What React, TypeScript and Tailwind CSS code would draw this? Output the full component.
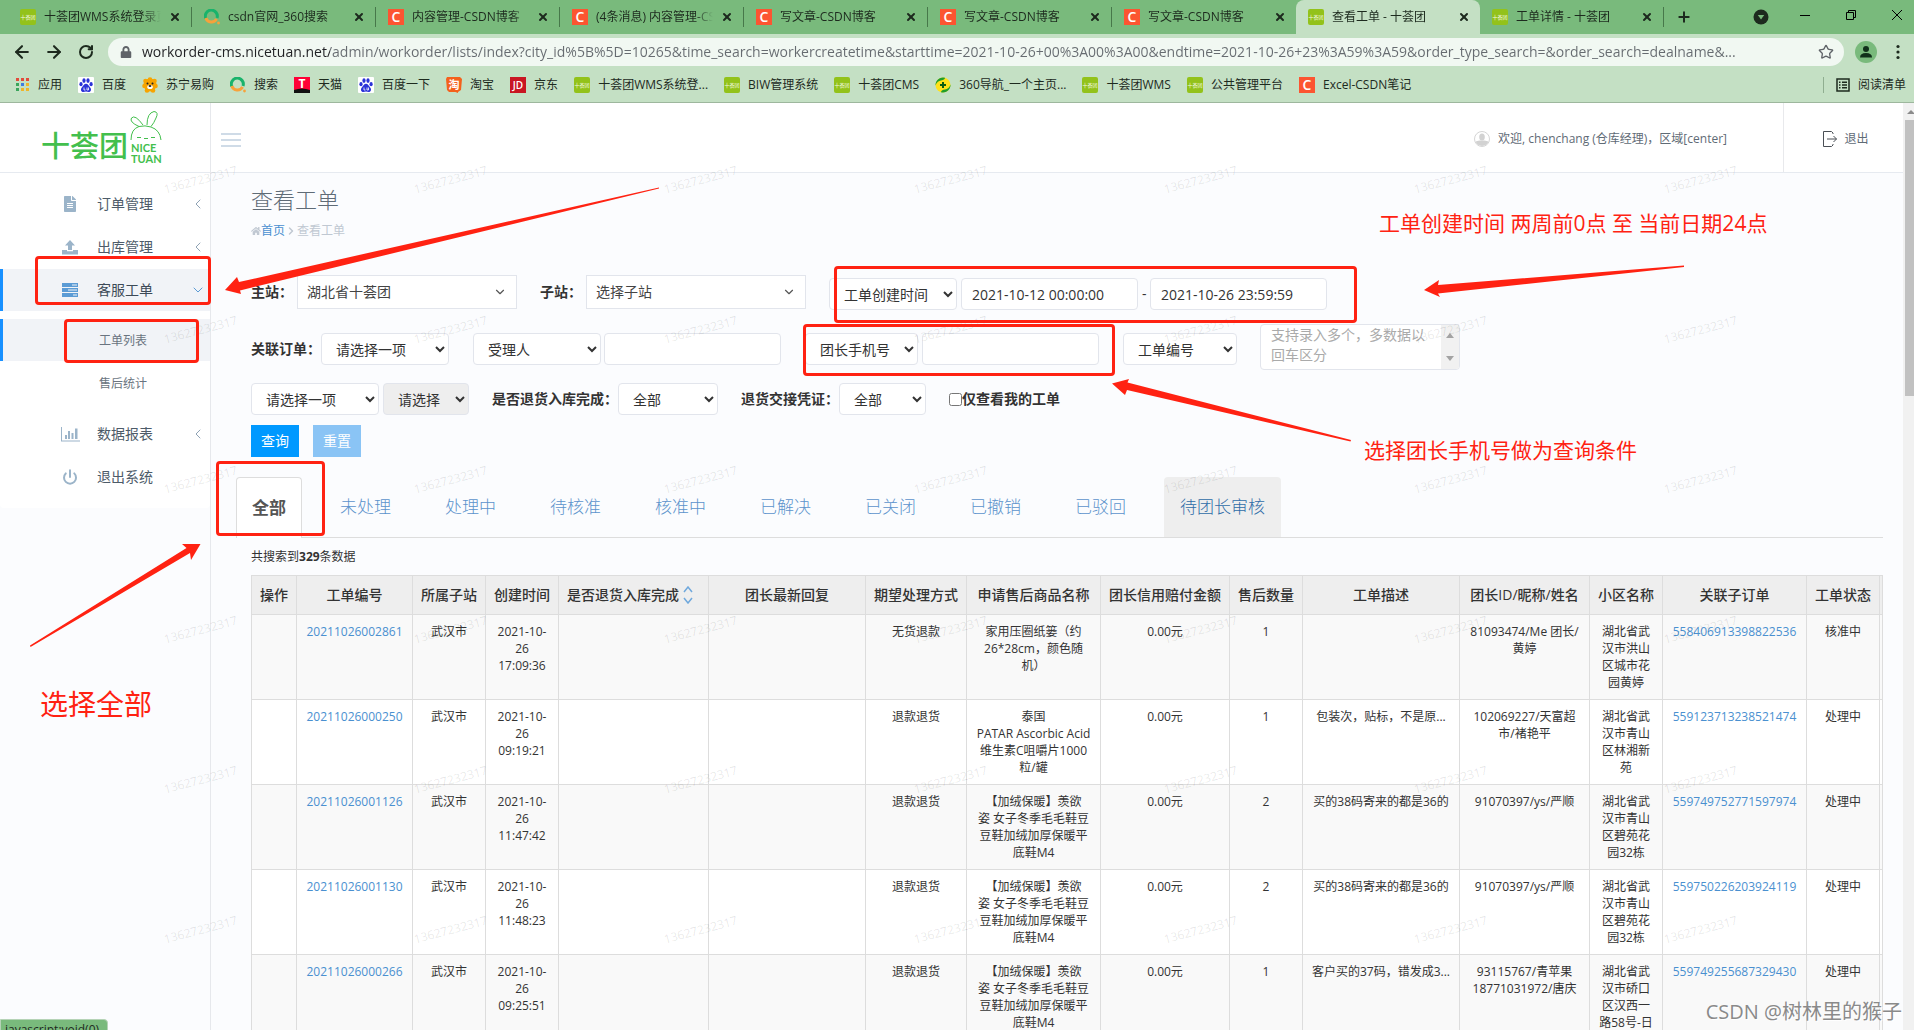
import type { ReactNode } from "react";
import clsx from "clsx";
import { ArrowLeft, ArrowRight, ChevronDown, ChevronLeft, ChevronRight, Plus, Power, RotateCw, Star, X } from "lucide-react";
import { FaFileAlt, FaHome, FaLock } from "react-icons/fa";

/* ---------- site icons ---------- */

function NiceTuanIcon() {
  return (
    <svg viewBox="0 0 16 16" className="size-4 shrink-0">
      <rect width="16" height="16" rx="2" fill="#93c21a" />
      <text x="8" y="10" fontSize="5" textAnchor="middle" fill="#f3f9e2">
        十荟团
      </text>
    </svg>
  );
}

function LetterIcon({ letter, color }: { letter: string; color: string }) {
  return (
    <svg viewBox="0 0 16 16" className="size-4 shrink-0">
      <rect width="16" height="16" fill={color} />
      {letter === "T" && <path d="M0 16v-3q8-3 16 0v3z" fill="#111" />}
      <text
        x="8"
        y={letter === "T" ? 11 : letter === "JD" ? 12 : 13}
        fontSize={letter.length > 1 ? 10 : letter === "T" ? 12 : 14}
        fontWeight={letter === "T" ? 700 : 600}
        textAnchor="middle"
        fill="#fff"
      >
        {letter}
      </text>
    </svg>
  );
}

function SoIcon() {
  return (
    <svg viewBox="0 0 16 16" className="size-4 shrink-0" fill="none" strokeWidth="3">
      <path d="M1.8 9.5A6 6 0 1 1 13 9" stroke="#19b36b" />
      <path d="M1.8 9A6 6 0 0 0 12.6 10" stroke="#f7a23b" />
      <circle cx="14.5" cy="14" r="1.4" fill="#f7a23b" />
    </svg>
  );
}

function BaiduIcon() {
  return (
    <svg viewBox="0 0 16 16" className="size-4 shrink-0" fill="#2a32d8">
      <rect width="16" height="16" rx="1" fill="#fff" />
      <ellipse cx="3" cy="7.2" rx="1.6" ry="2.1" />
      <ellipse cx="6" cy="3.6" rx="1.6" ry="2.3" />
      <ellipse cx="10" cy="3.6" rx="1.6" ry="2.3" />
      <ellipse cx="13.1" cy="7.2" rx="1.6" ry="2.1" />
      <path d="M8 6.800c2 0 2.600 2 4 3.400 1.800 1.800 1.200 4.800-1.400 4.800-1 0-1.600-.4-2.600-.4s-1.600.4-2.600.4C2.800 15 2.200 12 4 10.200 5.400 8.800 6 6.800 8 6.800z" />
      <path d="M6 10.500v2.500h1.500M9 10.500v2.500h1.500v-2.500" stroke="#fff" strokeWidth=".8" fill="none" />
    </svg>
  );
}

function SuningIcon() {
  return (
    <svg viewBox="0 0 16 16" className="size-4 shrink-0">
      <g fill="#f7a400">
        <circle cx="8" cy="8" r="6.500" />
        <circle cx="3.500" cy="4" r="2.300" />
        <circle cx="12.500" cy="4" r="2.300" />
        <circle cx="8" cy="2.500" r="2.300" />
        <circle cx="2.500" cy="9" r="2.300" />
        <circle cx="13.500" cy="9" r="2.300" />
        <circle cx="5" cy="13.500" r="2.300" />
        <circle cx="11" cy="13.500" r="2.300" />
      </g>
      <circle cx="5.500" cy="6.500" r="1" fill="#222" />
      <circle cx="10.500" cy="6.500" r="1" fill="#222" />
      <ellipse cx="8" cy="10" rx="2.800" ry="2" fill="#fff" />
      <ellipse cx="8" cy="9" rx="1.400" ry="1" fill="#222" />
    </svg>
  );
}

function TaobaoIcon() {
  return (
    <svg viewBox="0 0 16 16" className="size-4 shrink-0">
      <path d="M1 0h13l2 2-1 11-3 2v1L9.500 15H3l-2-2L0 2z" fill="#f4611c" />
      <text x="8" y="12" fontSize="11" fontWeight="700" textAnchor="middle" fill="#fff">
        淘
      </text>
    </svg>
  );
}

function Nav360Icon() {
  return (
    <svg viewBox="0 0 16 16" className="size-4 shrink-0">
      <circle cx="8" cy="8" r="7.500" fill="#ffe11a" />
      <path d="M10 .8A7.500 7.500 0 0 0 .5 8.500Q2 4 6 3.500T10 .8zM6 15.200A7.500 7.500 0 0 0 15.500 7.500Q14 12 10 12.500T6 15.200z" fill="#1f9d2c" />
      <path d="M8 5v6M5 8h6" stroke="#0b5c12" strokeWidth="2" />
    </svg>
  );
}

function AppsIcon() {
  const colors = ["#e24a3b", "#e24a3b", "#e24a3b", "#3ba55c", "#3d7de0", "#efb52a", "#3ba55c", "#efb52a", "#efb52a"];
  return (
    <svg viewBox="0 0 14 14" className="size-3.5 shrink-0">
      {colors.map((fill, i) => (
        <rect key={i} x={(i % 3) * 5} y={Math.floor(i / 3) * 5} width="3" height="3" fill={fill} />
      ))}
    </svg>
  );
}

const csdn = <LetterIcon letter="C" color="#fc5531" />;
const tuan = <NiceTuanIcon />;

/* ---------- browser ---------- */

const browserTabs: { icon: ReactNode; title: string; active?: boolean }[] = [
  { icon: tuan, title: "十荟团WMS系统登录页面" },
  { icon: <SoIcon />, title: "csdn官网_360搜索" },
  { icon: csdn, title: "内容管理-CSDN博客" },
  { icon: csdn, title: "(4条消息) 内容管理-CSDN博客" },
  { icon: csdn, title: "写文章-CSDN博客" },
  { icon: csdn, title: "写文章-CSDN博客" },
  { icon: csdn, title: "写文章-CSDN博客" },
  { icon: tuan, title: "查看工单 - 十荟团", active: true },
  { icon: tuan, title: "工单详情 - 十荟团" },
];

const bookmarks: { icon: ReactNode; title: string }[] = [
  { icon: <AppsIcon />, title: "应用" },
  { icon: <BaiduIcon />, title: "百度" },
  { icon: <SuningIcon />, title: "苏宁易购" },
  { icon: <SoIcon />, title: "搜索" },
  { icon: <LetterIcon letter="T" color="#ff0036" />, title: "天猫" },
  { icon: <BaiduIcon />, title: "百度一下" },
  { icon: <TaobaoIcon />, title: "淘宝" },
  { icon: <LetterIcon letter="JD" color="#c91623" />, title: "京东" },
  { icon: tuan, title: "十荟团WMS系统登..." },
  { icon: tuan, title: "BIW管理系统" },
  { icon: tuan, title: "十荟团CMS" },
  { icon: <Nav360Icon />, title: "360导航_一个主页..." },
  { icon: tuan, title: "十荟团WMS" },
  { icon: tuan, title: "公共管理平台" },
  { icon: csdn, title: "Excel-CSDN笔记" },
];

const url =
  "workorder-cms.nicetuan.net/admin/workorder/lists/index?city_id%5B%5D=10265&time_search=workercreatetime&starttime=2021-10-26+00%3A00%3A00&endtime=2021-10-26+23%3A59%3A59&order_type_search=&order_search=dealname&...";

function TabStrip() {
  return (
    <div className="flex h-[34px] bg-[#79ba7c] pl-2">
      {browserTabs.map((tab, i) => (
        <div
          key={i}
          className={clsx(
            "flex min-w-0 max-w-[184px] flex-1 items-center",
            tab.active && "rounded-t-lg bg-[#c4e0c4]"
          )}
        >
          <div className="flex min-w-0 flex-1 items-center gap-2 pr-2.5 pl-3">
            {tab.icon}
            <span className="min-w-0 flex-1 overflow-hidden whitespace-nowrap text-xs text-[#1d2a1e] [mask-image:linear-gradient(90deg,#000_85%,transparent)]">
              {tab.title}
            </span>
            <button aria-label="关闭标签页">
              <X className="size-3 text-[#1d2a1e]" strokeWidth={4} />
            </button>
          </div>
          {!tab.active && i !== 6 && <div className="h-5 w-px bg-[#47784a]" />}
        </div>
      ))}
      <button aria-label="新标签页" className="ml-3">
        <Plus className="size-4 text-[#1d2a1e]" strokeWidth={3} />
      </button>
      <div className="ml-auto flex items-center gap-[34px] pr-[11px] text-black">
        <svg viewBox="0 0 16 16" className="-mr-1 size-4">
          <circle cx="8" cy="8" r="7.500" fill="#1d2a1e" />
          <path d="M4.800 6h6.400L8 10.500z" fill="#79ba7c" />
        </svg>
        <svg viewBox="0 0 12 12" className="mb-1 size-3" stroke="currentColor" fill="none">
          <path d="M1 6.500h10" />
        </svg>
        <svg viewBox="0 0 12 12" className="mb-1 size-3" stroke="currentColor" fill="none">
          <path d="M1.500 3.500h7v7h-7zM3.500 3.500v-2h7v7h-2" />
        </svg>
        <svg viewBox="0 0 12 12" className="mb-1 size-3" stroke="currentColor" fill="none">
          <path d="M1 1l10 10M11 1L1 11" />
        </svg>
      </div>
    </div>
  );
}

function BrowserChrome() {
  return (
    <div className="shrink-0 border-b border-[#9db79d] bg-[#c4e0c4] text-[#1d2a1e]">
      <TabStrip />
      <div className="flex items-center pt-1 pr-3 pl-3">
        <div className="flex gap-3">
          <ArrowLeft className="size-5" strokeWidth={2.500} />
          <ArrowRight className="size-5" strokeWidth={2.500} />
          <RotateCw className="size-5 p-0.5" strokeWidth={3} />
        </div>
        <div className="ml-3 flex h-7 min-w-0 flex-1 items-center rounded-full bg-[#f1f8f2] pr-2.5 pl-3">
          <FaLock className="size-3 text-[#5f6368]" />
          <input
            aria-label="地址"
            readOnly
            value={url}
            className="ml-2.5 min-w-0 flex-1 bg-[linear-gradient(90deg,#202124_188px,#666b70_188px)] bg-clip-text text-sm text-transparent outline-none"
          />
          <Star className="size-4 text-[#5f6368]" />
        </div>
        <svg viewBox="0 0 22 22" className="ml-[11px] size-[22px]">
          <circle cx="11" cy="11" r="11" fill="#79ba7c" />
          <circle cx="11" cy="8" r="3" fill="#10301a" />
          <path d="M5 16.500q0-4.500 6-4.500t6 4.500z" fill="#10301a" />
        </svg>
        <svg viewBox="0 0 4 16" className="mr-0.5 ml-[19px] h-4 w-1" fill="currentColor">
          <circle cx="2" cy="2.500" r="1.600" />
          <circle cx="2" cy="8" r="1.600" />
          <circle cx="2" cy="13.500" r="1.600" />
        </svg>
      </div>
      <div className="flex h-9 items-center gap-4 pt-px pl-4 text-xs">
        {bookmarks.map((item) => (
          <a key={item.title} href="#" className="flex items-center gap-2 whitespace-nowrap">
            {item.icon}
            {item.title}
          </a>
        ))}
        <button className="ml-auto flex items-center gap-2 border-l border-[#8fae90] pr-2 pl-3">
          <svg viewBox="0 0 14 14" className="size-3.5" fill="none" stroke="currentColor" strokeWidth="1.500">
            <path d="M1 1h12v12H1zM3 4.200h1.500M3 7h1.500M3 9.800h1.500M6 4.200h5M6 7h5M6 9.800h5" />
          </svg>
          阅读清单
        </button>
      </div>
    </div>
  );
}

/* ---------- sidebar ---------- */

function Logo() {
  return (
    <svg viewBox="0 0 122 56" className="h-14 w-[122px]" fill="#43bf4d">
      <text x="1" y="48" fontSize="29" fontWeight="500">
        十荟团
      </text>
      <text x="91" y="43" fontSize="11" fontWeight="700" fontFamily="Lato">
        NICE
      </text>
      <text x="91" y="54" fontSize="11" fontWeight="700" fontFamily="Lato">
        TUAN
      </text>
      <g fill="none" stroke="#43bf4d">
        <path d="M91 31Q91 20 99 17.500Q105 16 111 18Q120 21 121 31" />
        <path d="M99 17.500Q89 13 91.500 9Q95 5 103 16" />
        <path d="M107 16Q107 4 114 2.500Q119 3 116 9Q114 14 111 17.500" />
        <path d="M97 28.500h4M104 29.500h4M111 28.500h4" />
      </g>
    </svg>
  );
}

function UploadIcon() {
  return (
    <svg viewBox="0 0 16 15" className="h-[15px] w-4" fill="currentColor">
      <path d="M8 0l5 5.500H10V10H6V5.500H3zM0 10h5v1.200h6V10h5v4.500H0z" />
    </svg>
  );
}

function ServerIcon() {
  return (
    <svg viewBox="0 0 16 14" className="h-3.5 w-4" fill="currentColor">
      <path d="M0 0h16v4H0zM0 5h16v4H0zM0 10h16v4H0z" />
      <path d="M10 2h5M6 7h9M11 12h4" stroke="#f1f3f7" strokeWidth="1" />
    </svg>
  );
}

function ChartIcon() {
  return (
    <svg viewBox="0 0 19 15" className="h-[15px] w-[19px]" fill="currentColor">
      <path d="M0 0h1v13.500h18v1H0zM4 8h2v4H4zM7 4h2v8H7zM10.500 6h2v6h-2zM14 1.500h2.500V12H14z" />
    </svg>
  );
}

function MenuItem({ icon, label, active, arrow }: { icon: ReactNode; label: string; active?: boolean; arrow?: ReactNode }) {
  return (
    <a
      href="#"
      className={clsx(
        "mt-px flex h-[42px] items-center border-l-3 pr-1 text-sm",
        active ? "border-[#1890ff] bg-[#f1f3f7] text-[#3d4a57]" : "border-transparent text-[#4d5b69]"
      )}
    >
      <span className={clsx("ml-[52px] flex w-[30px] justify-center", active ? "text-[#5b9bd5]" : "text-[#9bb4c9]")}>{icon}</span>
      <span className="ml-3 flex-1">{label}</span>
      {arrow}
    </a>
  );
}

function SubItem({ label, active }: { label: string; active?: boolean }) {
  return (
    <a
      href="#"
      className={clsx(
        "mt-px flex h-[42px] items-center border-l-3 pt-0.5 pl-24 text-xs text-[#6a7480]",
        active ? "border-[#1890ff] bg-[#f1f3f7]" : "border-transparent"
      )}
    >
      {label}
    </a>
  );
}

function Sidebar() {
  const left = <ChevronLeft className="size-4 text-[#8fa3b5]" strokeWidth={1.500} />;
  return (
    <aside className="w-[211px] shrink-0 border-r border-[#e6e8ec]">
      <div className="flex h-[70px] justify-end border-b border-[#e6eaf0] bg-white pt-1.5 pr-12">
        <Logo />
      </div>
      <nav className="rounded-b bg-white pt-[9px] pb-2.5">
        <MenuItem icon={<FaFileAlt className="size-4" />} label="订单管理" arrow={left} />
        <MenuItem icon={<UploadIcon />} label="出库管理" arrow={left} />
        <MenuItem icon={<ServerIcon />} label="客服工单" active arrow={<ChevronDown className="size-4 text-[#5b9bd5]" strokeWidth={1.500} />} />
        <div className="pt-[7px] pb-2">
          <SubItem label="工单列表" active />
          <SubItem label="售后统计" />
        </div>
        <MenuItem icon={<ChartIcon />} label="数据报表" arrow={left} />
        <MenuItem icon={<Power className="size-4" strokeWidth={3} />} label="退出系统" />
      </nav>
    </aside>
  );
}

function TopBar() {
  return (
    <header className="flex h-[70px] items-center border-b border-[#e6eaf0] bg-white pl-2.5 text-xs text-[#5f6b76]">
      <button aria-label="菜单" className="pt-1">
        <svg viewBox="0 0 20 14" className="h-3.5 w-5" stroke="#cfdbe7" strokeWidth="2">
          <path d="M0 1h20M0 7h20M0 13h20" />
        </svg>
      </button>
      <div className="mr-14 ml-auto flex items-center gap-2 pt-0.5">
        <svg viewBox="0 0 16 16" className="size-4">
          <circle cx="8" cy="8" r="7.500" fill="#fff" stroke="#d5d5d5" />
          <ellipse cx="8" cy="6" rx="2.800" ry="3.600" fill="#d2d2d2" />
          <path d="M1.500 10.500q3.500-1 4.500-1h4q1 0 4.500 1A7 7 0 0 1 1.500 10.500z" fill="#d2d2d2" />
        </svg>
        欢迎, chenchang (仓库经理)，区域[center]
      </div>
      <a href="#" className="flex h-full w-[120px] items-center justify-center gap-1.5 border-l border-[#e8e9ec] pt-0.5 pl-1">
        <svg viewBox="0 0 16 16" className="size-4" fill="none" stroke="#4a4f55">
          <path d="M11 3V2L9.500.5h-8v15h8L11 14v-1M5 8h9.500M11.500 5l3 3-3 3" />
        </svg>
        退出
      </a>
    </header>
  );
}

/* ---------- search form ---------- */

const control = "h-8 rounded border border-[#e2e5ec] bg-white px-2.5 text-sm text-[#333]";

function NativeSelect({ label, value, className }: { label: string; value: string; className: string }) {
  return (
    <select aria-label={label} disabled={value === "请选择"} className={clsx(control, "disabled:bg-[#eee] disabled:opacity-100", className)}>
      <option>{value}</option>
    </select>
  );
}

function StationSelect({ id, label, value }: { id: string; label: string; value: string }) {
  return (
    <div className="flex items-center">
      <label htmlFor={id} className="text-sm font-bold">
        {label}
      </label>
      <div className="relative ml-1">
        <select id={id} className="h-[34px] w-[220px] appearance-none border border-[#e2e5ec] bg-white pl-[9px] text-sm text-[#444]">
          <option>{value}</option>
        </select>
        <ChevronDown className="pointer-events-none absolute top-2.5 right-2.5 size-3.5 text-[#555]" strokeWidth={2} />
      </div>
    </div>
  );
}

function SearchForm() {
  return (
    <form className="mt-9 pl-[15px] text-[#333]">
      <div className="flex items-start gap-[23px]">
        <StationSelect id="main-station" label="主站：" value="湖北省十荟团" />
        <StationSelect id="sub-station" label="子站：" value="选择子站" />
        <div className="flex items-center gap-1 pt-[3px]">
          <NativeSelect label="时间类型" value="工单创建时间" className="w-32" />
          <input aria-label="开始时间" defaultValue="2021-10-12 00:00:00" className={clsx(control, "w-[177px]")} />
          <span className="w-1 text-sm">-</span>
          <input aria-label="结束时间" defaultValue="2021-10-26 23:59:59" className={clsx(control, "w-[177px]")} />
        </div>
      </div>

      <div className="mt-3.5 flex items-start gap-6">
        <div className="flex items-center pt-[9px]">
          <label htmlFor="related-order" className="text-sm font-bold">
            关联订单：
          </label>
          <select id="related-order" className={clsx(control, "w-32")}>
            <option>请选择一项</option>
          </select>
        </div>
        <div className="flex gap-[3px] pt-[9px]">
          <NativeSelect label="人员类型" value="受理人" className="w-32" />
          <input aria-label="人员" className={clsx(control, "w-[177px]")} />
        </div>
        <div className="flex gap-1 pt-[9px]">
          <NativeSelect label="团长条件" value="团长手机号" className="w-[113px]" />
          <input aria-label="团长" className={clsx(control, "w-[177px]")} />
        </div>
        <div className="flex gap-[23px]">
          <div className="pt-[9px]">
            <NativeSelect label="编号类型" value="工单编号" className="w-[114px]" />
          </div>
          <div className="flex h-[46px] w-[200px] overflow-hidden rounded border border-[#e2e5ec] bg-white">
            <textarea
              aria-label="编号"
              placeholder="支持录入多个，多数据以回车区分"
              className="min-w-0 flex-1 resize-none overflow-hidden px-2.5 text-sm/5 text-[#333] outline-none placeholder:text-[#aaa]"
            />
            <div className="flex w-[18px] flex-col items-center justify-between bg-[#f1f1f1] py-2">
              <svg viewBox="0 0 8 5" className="h-[5px] w-2" fill="#a3a3a3">
                <path d="M0 5l4-5 4 5z" />
              </svg>
              <svg viewBox="0 0 8 5" className="h-[5px] w-2" fill="#a3a3a3">
                <path d="M0 0l4 5 4-5z" />
              </svg>
            </div>
          </div>
        </div>
      </div>

      <div className="mt-[13px] flex items-center gap-[23px]">
        <div className="flex gap-1">
          <NativeSelect label="分类" value="请选择一项" className="w-32" />
          <NativeSelect label="子分类" value="请选择" className="w-[86px]" />
        </div>
        <div className="flex items-center">
          <label htmlFor="returned" className="text-sm font-bold">
            是否退货入库完成：
          </label>
          <select id="returned" className={clsx(control, "w-[100px]")}>
            <option>全部</option>
          </select>
        </div>
        <div className="flex items-center">
          <label htmlFor="voucher" className="text-sm font-bold">
            退货交接凭证：
          </label>
          <select id="voucher" className={clsx(control, "w-[87px]")}>
            <option>全部</option>
          </select>
        </div>
        <label className="flex items-center text-sm font-bold">
          <input type="checkbox" className="size-[13px]" />
          仅查看我的工单
        </label>
      </div>

      <div className="mt-2.5 flex gap-3.5">
        <button type="button" className="h-8 w-12 bg-[#0099ff] text-sm text-white">
          查询
        </button>
        <button type="button" className="h-8 w-12 bg-[#8ac4f5] text-sm text-white">
          重置
        </button>
      </div>
    </form>
  );
}

const statusTabs = ["全部", "未处理", "处理中", "待核准", "核准中", "已解决", "已关闭", "已撤销", "已驳回", "待团长审核"];

function StatusTabs() {
  return (
    <div className="mt-5 flex h-[61px] gap-[22px] border-b border-[#ddd] text-[17px]">
      {statusTabs.map((label, i) => (
        <button
          key={label}
          className={clsx(
            "rounded-t",
            i === 0 && "-mb-px w-[66px] border border-b-0 border-[#ddd] bg-white font-bold text-[#555]",
            i > 0 && i < 9 && "px-4 font-light text-[#5b93cc]",
            i === 9 && "bg-[#eee] px-4 font-light text-[#2f6ca8]"
          )}
        >
          {label}
        </button>
      ))}
    </div>
  );
}

/* ---------- orders ---------- */

const columns: { title: string; width: string; sortable?: boolean }[] = [
  { title: "操作", width: "w-[45px]" },
  { title: "工单编号", width: "w-[116px]" },
  { title: "所属子站", width: "w-[73px]" },
  { title: "创建时间", width: "w-[73px]" },
  { title: "是否退货入库完成", width: "w-[150px]", sortable: true },
  { title: "团长最新回复", width: "" },
  { title: "期望处理方式", width: "w-[101px]" },
  { title: "申请售后商品名称", width: "w-[134px]" },
  { title: "团长信用赔付金额", width: "w-[129px]" },
  { title: "售后数量", width: "w-[73px]" },
  { title: "工单描述", width: "w-[157px]" },
  { title: "团长ID/昵称/姓名", width: "w-[130px]" },
  { title: "小区名称", width: "w-[73px]" },
  { title: "关联子订单", width: "w-[144px]" },
  { title: "工单状态", width: "w-[73px]" },
  { title: "", width: "w-[3px]" },
];

const shoes = ["【加绒保暖】羡欲", "姿 女子冬季毛毛鞋豆", "豆鞋加绒加厚保暖平", "底鞋M4"];

const orders = [
  {
    id: "20211026002861",
    time: "17:09:36",
    way: "无货退款",
    goods: ["家用压圈纸篓（约", "26*28cm，颜色随", "机）"],
    count: 1,
    desc: "",
    leader: ["81093474/Me 团长/", "黄婷"],
    area: ["湖北省武", "汉市洪山", "区城市花", "园黄婷"],
    sub: "558406913398822536",
    status: "核准中",
  },
  {
    id: "20211026000250",
    time: "09:19:21",
    way: "退款退货",
    goods: ["泰国", "PATAR Ascorbic Acid", "维生素C咀嚼片1000", "粒/罐"],
    count: 1,
    desc: "包装次，贴标，不是原...",
    leader: ["102069227/天富超", "市/褚艳平"],
    area: ["湖北省武", "汉市青山", "区林湘新", "苑"],
    sub: "559123713238521474",
    status: "处理中",
  },
  {
    id: "20211026001126",
    time: "11:47:42",
    way: "退款退货",
    goods: shoes,
    count: 2,
    desc: "买的38码寄来的都是36的",
    leader: ["91070397/ys/严顺"],
    area: ["湖北省武", "汉市青山", "区碧苑花", "园32栋"],
    sub: "559749752771597974",
    status: "处理中",
  },
  {
    id: "20211026001130",
    time: "11:48:23",
    way: "退款退货",
    goods: shoes,
    count: 2,
    desc: "买的38码寄来的都是36的",
    leader: ["91070397/ys/严顺"],
    area: ["湖北省武", "汉市青山", "区碧苑花", "园32栋"],
    sub: "559750226203924119",
    status: "处理中",
  },
  {
    id: "20211026000266",
    time: "09:25:51",
    way: "退款退货",
    goods: shoes,
    count: 1,
    desc: "客户买的37码，错发成3...",
    leader: ["93115767/青苹果", "18771031972/唐庆"],
    area: ["湖北省武", "汉市硚口", "区汉西一", "路58号-日"],
    sub: "559749255687329430",
    status: "处理中",
  },
];

function Cell({ lines, link }: { lines?: string[]; link?: boolean }) {
  return (
    <td className="border border-[#ddd] py-2 text-center align-top whitespace-nowrap">
      {lines?.map((line, i) =>
        link ? (
          <a key={i} href="#" className="text-[#4a90d0]">
            {line}
          </a>
        ) : (
          <div key={i}>{line}</div>
        )
      )}
    </td>
  );
}

function OrderTable() {
  return (
    <table className="mt-2.5 w-full table-fixed border-collapse text-xs/[17px] text-[#333]">
      <thead>
        <tr className="h-[39px] bg-[#eee]">
          {columns.map((col) => (
            <th key={col.title} className={clsx("border border-[#ddd] text-sm/5 font-medium whitespace-nowrap", col.width)}>
              {col.sortable ? (
                <button className="flex w-full items-center gap-1 pl-2">
                  {col.title}
                  <svg viewBox="0 0 10 18" className="h-[18px] w-2.5" fill="none" stroke="#6fa8dc" strokeWidth="1.500">
                    <path d="M1 6l4-5 4 5M1 12l4 5 4-5" />
                  </svg>
                </button>
              ) : (
                col.title
              )}
            </th>
          ))}
        </tr>
      </thead>
      <tbody>
        {orders.map((order) => (
          <tr key={order.id} className="h-[85px] odd:bg-[#f9f9f9] even:bg-white">
            <Cell />
            <Cell lines={[order.id]} link />
            <Cell lines={["武汉市"]} />
            <Cell lines={["2021-10-", "26", order.time]} />
            <Cell />
            <Cell />
            <Cell lines={[order.way]} />
            <Cell lines={order.goods} />
            <Cell lines={["0.00元"]} />
            <Cell lines={[String(order.count)]} />
            <Cell lines={[order.desc]} />
            <Cell lines={order.leader} />
            <Cell lines={order.area} />
            <Cell lines={[order.sub]} link />
            <Cell lines={[order.status]} />
            <Cell />
          </tr>
        ))}
      </tbody>
    </table>
  );
}

/* ---------- overlays ---------- */

function Watermarks() {
  return (
    <div className="pointer-events-none absolute inset-0 overflow-hidden">
      <div className="absolute top-[171px] left-[163px] grid grid-cols-[repeat(7,250px)] text-xs/[18px] text-black/10">
        {Array.from({ length: 42 }, (_, i) => (
          <div key={i} className="h-[150px]">
            <span className="inline-block -rotate-[15deg]">13627232317</span>
          </div>
        ))}
      </div>
    </div>
  );
}

function Annotations() {
  const box = "absolute rounded-sm border-3 border-[#ff2212]";
  return (
    <div className="pointer-events-none absolute inset-0 overflow-hidden text-[21px]/[30px] whitespace-nowrap text-[#ff2212]">
      <div className={clsx(box, "top-[256px] left-[35px] h-[49px] w-[176px]")} />
      <div className={clsx(box, "top-[319px] left-[64px] h-[44px] w-[135px]")} />
      <div className={clsx(box, "top-[266px] left-[834px] h-[57px] w-[523px]")} />
      <div className={clsx(box, "top-[324px] left-[803px] h-[52px] w-[312px]")} />
      <div className={clsx(box, "top-[461px] left-[216px] h-[75px] w-[109px]")} />
      <svg className="absolute inset-0 size-full" fill="#ff2212">
        <path d="M225 290L237 277L239 282L659 187.500L659 188.500L240 290.500L241 294z" />
        <path d="M1424 290L1439 280L1438 285L1684 265.500V267L1438 293.500L1440 297z" />
        <path d="M1112 383.500L1129 379L1127.500 382.500L1351 440L1350.500 441.500L1127 390L1125 395z" />
        <path d="M200.500 544L182 544L186.500 548L30 645.500L30.500 647L190 553L191 560z" />
      </svg>
      <p className="absolute top-[208px] left-[1379px]">工单创建时间 两周前0点 至 当前日期24点</p>
      <p className="absolute top-[435px] left-[1364px]">选择团长手机号做为查询条件</p>
      <p className="absolute top-[689px] left-10 text-[28px]/[30px]">选择全部</p>
      <p className="absolute right-3 bottom-1 text-xl/7 text-[#8a8a8a] [text-shadow:1px_1px_0_#fff]">CSDN @树林里的猴子</p>
    </div>
  );
}

export default function App() {
  return (
    <div className="relative flex h-screen flex-col overflow-hidden bg-[#fbfcfe] font-['Open_Sans','Noto_Sans_CJK_SC',sans-serif]">
      <BrowserChrome />
      <div className="flex min-h-0 flex-1">
        <Sidebar />
        <div className="min-w-0 flex-1 overflow-hidden">
          <TopBar />
          <main className="pt-3 pr-5 pl-[25px]">
            <h1 className="pl-[15px] text-[22px]/7 font-light text-[#5f6b76]">查看工单</h1>
            <div className="mt-2.5 flex items-center pl-[15px] text-xs/4 text-[#c0c8d2]">
              <FaHome className="size-2.5" />
              <a href="#" className="text-[#4a90d0]">
                首页
              </a>
              <ChevronRight className="size-3" strokeWidth={3} />
              查看工单
            </div>
            <SearchForm />
            <StatusTabs />
            <div className="pl-[15px]">
              <p className="mt-[11px] text-xs/4 text-[#333]">
                共搜索到<b>329</b>条数据
              </p>
              <OrderTable />
            </div>
          </main>
        </div>
        <div className="w-[11px] shrink-0 bg-[#f1f1f1] pl-0.5">
          <svg viewBox="0 0 9 17" className="h-[17px] w-[9px]" fill="#8b8b8b">
            <path d="M2 11l4-4 4 4z" />
          </svg>
          <div className="h-[276px] bg-[#c1c1c1]" />
        </div>
      </div>
      <Watermarks />
      <div className="absolute top-[1019px] left-0 h-5 w-[108px] rounded-tr border border-[#b5d3b6] bg-[#79ba7c] pl-1 text-xs/5 text-[#1d2a1e]">
        javascript:void(0)
      </div>
      <Annotations />
    </div>
  );
}
